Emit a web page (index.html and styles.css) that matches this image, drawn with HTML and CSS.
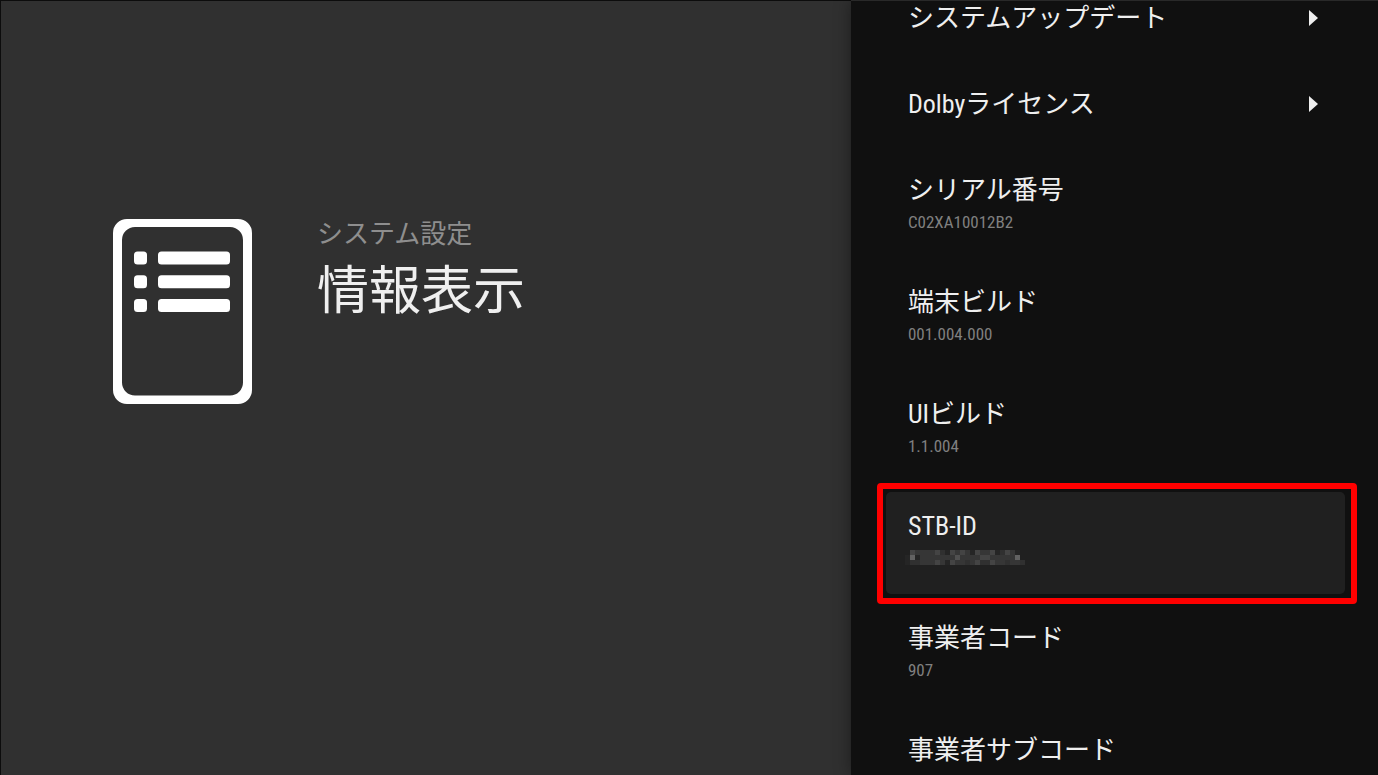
FILE: index.html
```html
<!DOCTYPE html>
<html lang="ja">
<head>
<meta charset="utf-8">
<meta name="viewport" content="width=device-width, initial-scale=1">
<title>情報表示</title>
<link rel="stylesheet" href="styles.css">
</head>
<body>
<div class="screen">
  <main class="summary">
    <svg class="summary-icon" viewBox="0 0 139 185" fill="#fff" aria-hidden="true">
      <path fill-rule="evenodd" d="M14 0H125A14 14 0 0 1 139 14V171A14 14 0 0 1 125 185H14A14 14 0 0 1 0 171V14A14 14 0 0 1 14 0ZM22 8A13 13 0 0 0 9 21V163.500A13 13 0 0 0 22 176.500H117A13 13 0 0 0 130 163.500V21A13 13 0 0 0 117 8Z"/>
      <rect x="21" y="32.500" width="13" height="13" rx="3.500"/>
      <rect x="45" y="32.500" width="72" height="13" rx="3.500"/>
      <rect x="21" y="56.300" width="13" height="13" rx="3.500"/>
      <rect x="45" y="56.300" width="72" height="13" rx="3.500"/>
      <rect x="21" y="80" width="13" height="13" rx="3.500"/>
      <rect x="45" y="80" width="72" height="13" rx="3.500"/>
    </svg>
    <div class="summary-text">
      <p class="category">システム設定</p>
      <h1 class="title">情報表示</h1>
    </div>
  </main>
  <aside class="panel">
    <ul class="list links">
      <li><button class="item" type="button"><span class="name">システムアップデート</span><svg class="arrow" viewBox="0 0 9 16" aria-hidden="true"><path d="M0 0L9 8L0 16Z"/></svg></button></li>
      <li><button class="item" type="button"><span class="name">Dolbyライセンス</span><svg class="arrow" viewBox="0 0 9 16" aria-hidden="true"><path d="M0 0L9 8L0 16Z"/></svg></button></li>
    </ul>
    <ul class="list details">
      <li class="entry"><p class="name">シリアル番号</p><p class="value">C02XA10012B2</p></li>
      <li class="entry"><p class="name">端末ビルド</p><p class="value">001.004.000</p></li>
      <li class="entry"><p class="name">UIビルド</p><p class="value">1.1.004</p></li>
      <li class="entry selected"><p class="name">STB-ID</p>
        <div class="value">
          <svg class="mosaic" viewBox="0 0 24 3" shape-rendering="crispEdges" role="img" aria-label="非表示">
            <path fill="#363636" d="M1 0H23V3H1Z"/>
            <path fill="#252525" d="M0 1H1V3H0ZM2 1H3V2H2ZM8 0H9V1H8ZM8 2H9V3H8ZM22 0H23V1H22ZM13 0H14V1H13ZM18 0H19V1H18Z"/>
            <path fill="#303030" d="M1 2H3V3H1ZM7 0H8V1H7ZM12 2H13V3H12ZM15 2H17V3H15ZM20 2H21V3H20ZM23 2H24V3H23ZM19 0H20V1H19Z"/>
            <path fill="#444" d="M1 0H2V1H1ZM6 0H7V1H6ZM6 2H7V3H6ZM9 0H10V1H9ZM9 2H10V3H9ZM11 0H12V1H11ZM14 0H15V1H14ZM14 2H15V3H14ZM17 0H18V1H17ZM17 2H18V3H17ZM15 1H17V2H15ZM20 0H21V1H20Z"/>
            <path fill="#505050" d="M10 1H11V2H10Z"/>
            <path fill="#626262" d="M1 1H2V2H1ZM22 1H23V2H22Z"/>
          </svg>
        </div>
      </li>
      <li class="entry"><p class="name">事業者コード</p><p class="value">907</p></li>
      <li class="entry"><p class="name">事業者サブコード</p></li>
    </ul>
  </aside>
</div>
</body>
</html>
```
FILE: styles.css
```css
* { box-sizing: border-box; }

body {
  margin: 0;
  background: #303030;
  color: #efefef;
  font-family: "Roboto Condensed", "Noto Sans CJK JP", sans-serif;
}

p, h1, ul { margin: 0; padding: 0; }

.screen {
  display: grid;
  grid-template-columns: minmax(0, 1fr) 38.25%;
  height: 100vh;
  overflow: hidden;
}

.summary {
  display: flex;
  align-items: flex-start;
  gap: 65px;
  padding: 218px 32px 32px 112px;
  border-top: 1px solid #0c0c0c;
  border-left: 1px solid #0c0c0c;
}

.summary-icon { flex: none; width: 139px; height: 185px; }

.category {
  color: #8e8e8e;
  font-size: 26px;
  line-height: 30px;
}

.title {
  font-size: 52px;
  font-weight: 400;
  line-height: 86px;
}

.panel {
  min-height: 0;
  padding: 0 33px 0 35px;
  border-top: 1px solid #292929;
  background: #101010;
  box-shadow: 0 0 16px rgba(0, 0, 0, 0.4);
  overflow: hidden;
}

.list {
  display: flex;
  flex-direction: column;
  gap: 10px;
  list-style: none;
}

/* The list is scrolled part of the way down. */
.links { margin-top: -21px; }

.details { margin-top: 14px; }

.item {
  display: flex;
  align-items: center;
  justify-content: space-between;
  width: 100%;
  padding: 19px 27px 19px 22px;
  border: 0;
  background: none;
  color: inherit;
  font-family: inherit;
  text-align: left;
}

.name {
  font-size: 26px;
  line-height: 38px;
  white-space: nowrap;
}

.arrow {
  width: 9px;
  height: 16px;
  fill: #efefef;
}

.entry {
  position: relative;
  padding: 15px 22px 23px;
  border-radius: 5px;
}

.value {
  color: #808080;
  font-size: 17px;
  line-height: 26px;
}

.selected { background: #202020; }

.selected::after {
  content: "";
  position: absolute;
  inset: -9px -12px -10px -9px;
  border: 6px solid #f00;
  border-radius: 4px;
}

.mosaic {
  display: block;
  width: 120px;
  height: 24px;
  margin: 0 0 2px -3px;
}
```
